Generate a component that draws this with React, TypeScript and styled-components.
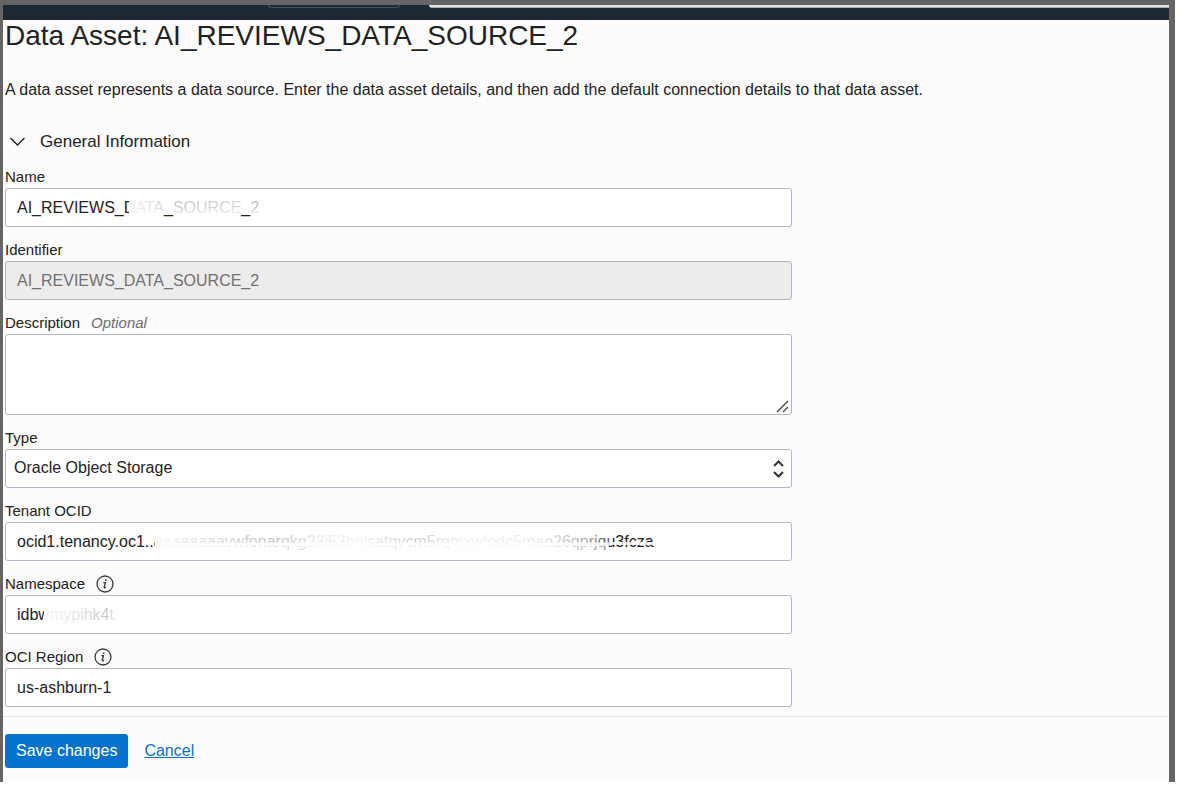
import React, { useId } from "react";
import styled, { createGlobalStyle, css } from "styled-components";

const GlobalStyle = createGlobalStyle`
  *, *::before, *::after { box-sizing: border-box; }
  body {
    margin: 0;
    background: #ffffff;
    color: #222222;
    font-family: "Liberation Sans", Arial, sans-serif;
    font-size: 16px;
  }
`;

const Window = styled.div`
  margin-right: 15px;
  border: solid #656565;
  border-width: 5px 6px 0 3px;
  background: #fcfcfc;
`;

const TopBar = styled.header`
  display: flex;
  align-items: flex-start;
  gap: 29px;
  height: 15px;
  padding-left: 265px;
  background: #1e2832;
`;

const BarTab = styled.div`
  flex: 0 0 132px;
  height: 3px;
  border: 1px solid #46505a;
  border-top: 0;
  border-radius: 0 0 3px 3px;
`;

const BarPanel = styled.div`
  flex: 1;
  height: 3px;
  border-bottom: 1px solid #a9adb8;
  border-bottom-left-radius: 3px;
  background: #e4e4e4;
`;

const Content = styled.main`
  padding: 0 2px 9px;
`;

const Title = styled.h1`
  margin: 0;
  font-size: 28px;
  font-weight: 400;
  line-height: 32px;
`;

const Intro = styled.p`
  margin: 28px 0 0;
  line-height: 20px;
`;

const SectionToggle = styled.button`
  display: flex;
  align-items: center;
  gap: 15px;
  margin: 32px 0 13px;
  padding: 0 5px;
  border: 0;
  background: none;
  color: inherit;
  font: inherit;
  font-size: 17px;
  line-height: 20px;
`;

const Form = styled.div`
  display: flex;
  flex-direction: column;
  gap: 11px;
  width: 67.7%;
`;

const FieldBox = styled.div`
  display: flex;
  flex-direction: column;
`;

const LabelRow = styled.div`
  display: flex;
  align-items: center;
  gap: 11px;
  height: 23px;
  font-size: 15px;
`;

const Optional = styled.em`
  color: #6b6b6b;
`;

const InfoButton = styled.button`
  display: flex;
  padding: 0;
  border: 0;
  background: none;
  color: #3c3c3c;
`;

const ControlWrap = styled.div`
  position: relative;
  display: flex;
`;

const control = css`
  width: 100%;
  margin: 0;
  border: 1px solid #b1b6c2;
  border-radius: 3px;
  background: #ffffff;
  color: #222222;
  font: inherit;
`;

const TextInput = styled.input`
  ${control}
  height: 39px;
  padding: 0 11px;
  &:disabled {
    background: #ececec;
    color: #717171;
  }
`;

const TextArea = styled.textarea`
  ${control}
  height: 81px;
  padding: 8px 11px;
  resize: none;
`;

const Select = styled.select`
  ${control}
  height: 39px;
  padding: 0 8px 2px;
  appearance: none;
`;

const Grip = styled.svg`
  position: absolute;
  right: 3px;
  bottom: 2px;
  pointer-events: none;
`;

const Arrows = styled.svg`
  position: absolute;
  right: 8px;
  top: 11px;
  pointer-events: none;
`;

const Veil = styled.span<{ $left: number; $width: number; $top: number; $height: number; $fill: string }>`
  position: absolute;
  left: ${(p) => p.$left}px;
  top: ${(p) => p.$top}px;
  width: ${(p) => p.$width}px;
  height: ${(p) => p.$height}px;
  background: ${(p) => p.$fill};
  pointer-events: none;
`;

const Footer = styled.footer`
  display: flex;
  align-items: center;
  gap: 16px;
  padding: 17px 2px 14px;
  border-top: 1px solid #e4e4e4;
`;

const SaveButton = styled.button`
  height: 34px;
  padding: 0 11px;
  border: 0;
  border-radius: 3px;
  background: #0572ce;
  color: #ffffff;
  font: inherit;
`;

const CancelLink = styled.a`
  color: #0572ce;
  text-decoration: underline;
`;

type FieldProps = {
  label: string;
  optional?: boolean;
  info?: boolean;
  children: (id: string) => React.ReactNode;
};

function Field({ label, optional, info, children }: FieldProps) {
  const id = useId();
  return (
    <FieldBox>
      <LabelRow>
        <label htmlFor={id}>{label}</label>
        {optional && <Optional>Optional</Optional>}
        {info && (
          <InfoButton type="button" aria-label={`About ${label}`}>
            <svg width="18" height="18" viewBox="0 0 18 18" fill="none" stroke="currentColor">
              <circle cx="9" cy="9" r="8" strokeWidth="1.3" />
              <path d="M7.3 7.6h2.1L8.3 12.2q-.1.9 1.6.2" strokeWidth="1.4" />
              <circle cx="9.7" cy="5.1" r=".9" fill="currentColor" stroke="none" />
            </svg>
          </InfoButton>
        )}
      </LabelRow>
      <ControlWrap>{children(id)}</ControlWrap>
    </FieldBox>
  );
}

export default function App() {
  return (
    <>
      <GlobalStyle />
      <Window>
        <TopBar>
          <BarTab />
          <BarPanel />
        </TopBar>
        <Content>
          <Title>Data Asset: AI_REVIEWS_DATA_SOURCE_2</Title>
          <Intro>
            A data asset represents a data source. Enter the data asset details, and then add the
            default connection details to that data asset.
          </Intro>
          <SectionToggle type="button" aria-expanded="true">
            <svg width="15" height="10" viewBox="0 0 15 10" fill="none" stroke="#222222" strokeWidth="1.4">
              <path d="M.5 1l7 7 7-7" />
            </svg>
            General Information
          </SectionToggle>
          <Form>
            <Field label="Name">
              {(id) => (
                <>
                  <TextInput id={id} defaultValue="AI_REVIEWS_DATA_SOURCE_2" />
                  <Veil $left={124} $top={8} $width={132} $height={18}
                    $fill="linear-gradient(180deg, #ffffff00 60%, #ffffffb0), linear-gradient(90deg, #fffffff0, #ffffffc0 40%, #ffffffd0 80%, #ffffffb0)" />
                </>
              )}
            </Field>
            <Field label="Identifier">
              {(id) => <TextInput id={id} defaultValue="AI_REVIEWS_DATA_SOURCE_2" disabled />}
            </Field>
            <Field label="Description" optional>
              {(id) => (
                <>
                  <TextArea id={id} />
                  <Grip width="13" height="13" viewBox="0 0 13 13" stroke="#4a4a4a" strokeWidth="1.4">
                    <path d="M1 12L12 1M7 12l5-5" />
                  </Grip>
                </>
              )}
            </Field>
            <Field label="Type">
              {(id) => (
                <>
                  <Select id={id}>
                    <option>Oracle Object Storage</option>
                  </Select>
                  <Arrows width="11" height="18" viewBox="0 0 11 18" fill="none" stroke="#333333" strokeWidth="2">
                    <path d="M1 6l4.5-4.5L10 6M1 12l4.5 4.5L10 12" />
                  </Arrows>
                </>
              )}
            </Field>
            <Field label="Tenant OCID">
              {(id) => (
                <>
                  <TextInput id={id} defaultValue="ocid1.tenancy.oc1..aaaaaaaavwfonarqkg23i53bnlsatqvcm5rqmxwfodc5mao26qprjqu3fcza" />
                  <Veil $left={150} $top={8} $width={454} $height={24}
                    $fill="linear-gradient(180deg, #ffffff00 50%, #ffffffd8 55%, #ffffffd8 65%, #ffffff40 70%), linear-gradient(90deg, #fffffff4, #ffffffd0 16%, #ffffffb8 26%, #ffffffe8 36%, #fffffff0 45%, #ffffffc8 57%, #fffffff0 68%, #ffffffe8 85%, #ffffffa0 95%, #ffffff40)" />
                  <Veil $left={604} $top={20} $width={45} $height={3} $fill="#ffffffd0" />
                </>
              )}
            </Field>
            <Field label="Namespace" info>
              {(id) => (
                <>
                  <TextInput id={id} defaultValue="idbwmypihk4t" />
                  <Veil $left={39} $top={8} $width={72} $height={24}
                    $fill="linear-gradient(90deg, #fffffff4, #ffffffe0 50%, #ffffffc0 88%, #fffffff0)" />
                </>
              )}
            </Field>
            <Field label="OCI Region" info>
              {(id) => <TextInput id={id} defaultValue="us-ashburn-1" />}
            </Field>
          </Form>
        </Content>
        <Footer>
          <SaveButton type="button">Save changes</SaveButton>
          <CancelLink href="#cancel">Cancel</CancelLink>
        </Footer>
      </Window>
    </>
  );
}
